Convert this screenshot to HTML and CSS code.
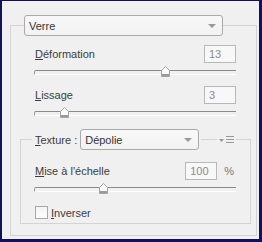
FILE: index.html
```html
<!DOCTYPE html>
<html lang="fr">

<head>
  <meta charset="UTF-8">
  <title>Verre</title>
  <link rel="stylesheet" href="styles.css">
</head>

<body>
  <div class="window">
    <fieldset class="group outer">
      <legend class="select wide">
        <span>Verre</span>
        <span class="arrow"></span>
      </legend>

      <div class="field">
        <span class="label"><u>D</u>éformation</span>
        <span class="num">13</span>
      </div>
      <div class="slider">
        <svg class="thumb" style="left: 65%" width="9" height="11" viewBox="0 0 9 11">
          <path d="M4.5 0.5L8.5 4.5V10.5H0.5V4.5Z" fill="#fcfcfc" stroke="#a4a4a4" />
          <path d="M1 8h7v2H1z" fill="#9a9a9a" />
        </svg>
      </div>

      <div class="field gap">
        <span class="label"><u>L</u>issage</span>
        <span class="num">3</span>
      </div>
      <div class="slider">
        <svg class="thumb" style="left: 15%" width="9" height="11" viewBox="0 0 9 11">
          <path d="M4.5 0.5L8.5 4.5V10.5H0.5V4.5Z" fill="#fcfcfc" stroke="#a4a4a4" />
          <path d="M1 8h7v2H1z" fill="#9a9a9a" />
        </svg>
      </div>

      <fieldset class="group inner">
        <legend class="texture">
          <span class="label"><u>T</u>exture :</span>
          <span class="select short">
            <span>Dépolie</span>
            <span class="arrow"></span>
          </span>
        </legend>
        <span class="menu">
          <svg width="15" height="8" viewBox="0 0 15 8">
            <path d="M0 3h5l-2.5 3z" fill="#999" />
            <path d="M7 0.5h8M7 3.5h8M7 6.5h8" stroke="#999" stroke-width="1" />
          </svg>
        </span>

        <div class="field">
          <span class="label"><u>M</u>ise à l'échelle</span>
          <span class="unit"><span class="num">100</span>%</span>
        </div>
        <div class="slider">
          <svg class="thumb" style="left: 34%" width="9" height="11" viewBox="0 0 9 11">
            <path d="M4.5 0.5L8.5 4.5V10.5H0.5V4.5Z" fill="#fcfcfc" stroke="#a4a4a4" />
            <path d="M1 8h7v2H1z" fill="#9a9a9a" />
          </svg>
        </div>

        <label class="check">
          <span class="box"></span>
          <span class="label"><u>I</u>nverser</span>
        </label>
      </fieldset>
    </fieldset>
  </div>
</body>

</html>
```

FILE: styles.css
```css
* {
  box-sizing: border-box;
}

body {
  margin: 0;
  font-family: 'Liberation Sans', Arial, sans-serif;
  font-size: 11px;
  color: #3c3c3c;
}

.window {
  width: 262px;
  height: 242px;
  border-style: solid;
  border-color: #12125a;
  border-width: 1px 3px 3px 2px;
  background: #f0f0f0;
  overflow: hidden;
  padding-top: 14px;
}

.group {
  border: 1px solid #d4d4d4;
  min-width: 0;
}

.outer {
  margin: 0 2px 0 8px;
  padding: 9px 20px 11px 24px;
}

.outer > legend {
  margin-left: -11px;
}

.select {
  display: flex;
  align-items: center;
  justify-content: space-between;
  height: 21px;
  padding: 0 6px 0 4px;
  border: 1px solid #aaaaaa;
  border-radius: 3px;
  background: linear-gradient(#f8f8f8, #f2f2f2);
  color: #333;
}

.wide {
  width: 199px;
}

.arrow {
  width: 0;
  height: 0;
  border-left: 4px solid transparent;
  border-right: 4px solid transparent;
  border-top: 4px solid #999;
}

.field {
  display: flex;
  align-items: center;
  justify-content: space-between;
  height: 18px;
}

.gap {
  margin-top: 7px;
}

.label u {
  text-decoration-thickness: 1px;
}

.num {
  display: inline-block;
  width: 32px;
  height: 18px;
  line-height: 16px;
  padding-left: 4px;
  border: 1px solid #b8b8b8;
  background: #f8f8f8;
  color: #8a8a8a;
}

.unit {
  display: flex;
  align-items: center;
  gap: 7px;
  padding-right: 2px;
  color: #777;
}

.slider {
  position: relative;
  height: 16px;
  margin-left: -1px;
}

.slider::before {
  content: "";
  position: absolute;
  left: 0;
  right: 0;
  top: 7px;
  height: 3px;
  border-top: 1px solid #8a8a8a;
  border-bottom: 1px solid #fff;
  border-left: 1px solid #9a9a9a;
  border-radius: 2px 0 0 0;
}

.thumb {
  position: absolute;
  top: 3px;
  margin-left: -4px;
}

.inner {
  position: relative;
  margin: 9px -15px 0 -15px;
  padding: 12px 14px 4px 14px;
}

.texture {
  display: flex;
  align-items: center;
  gap: 3px;
  margin-left: -3px;
  padding: 0 2px 0 3px;
}

.short {
  width: 119px;
}

.menu {
  position: absolute;
  top: -14px;
  right: 14px;
  padding: 0 2px;
  background: #f0f0f0;
  line-height: 0;
}

.check {
  display: flex;
  align-items: center;
  gap: 3px;
  margin-top: 10px;
}

.box {
  width: 13px;
  height: 13px;
  border: 1px solid #a8a8a8;
  background: linear-gradient(#f4f4f4, #fdfdfd);
}
```
